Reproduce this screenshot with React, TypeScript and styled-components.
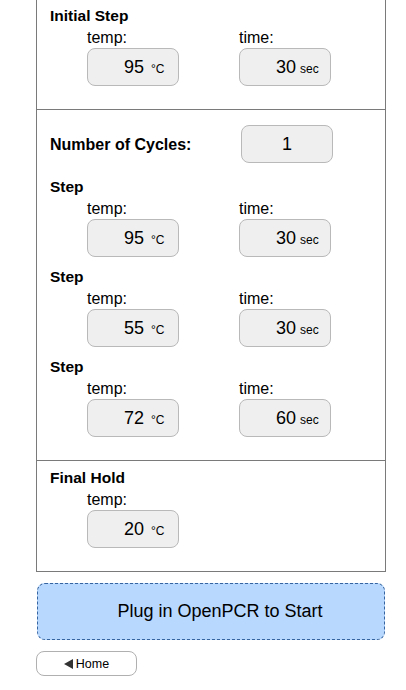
import styled, { createGlobalStyle } from "styled-components";

const GlobalStyle = createGlobalStyle`
  body {
    margin: 0;
    background: #ffffff;
    font-family: "Liberation Sans", Arial, Helvetica, sans-serif;
    color: #000;
  }
`;

const Page = styled.div`
  width: 406px;
  padding-left: 36px;
  box-sizing: border-box;
`;

const Panel = styled.div`
  width: 350px;
  box-sizing: border-box;
  border: 1px solid #7a7a7a;
  border-top: none;
`;

const Section = styled.div<{ $top: number; $divider?: boolean }>`
  padding: ${({ $top }) => $top}px 13px 23px 13px;
  border-top: ${({ $divider }) => ($divider ? "1px solid #7a7a7a" : "none")};
  display: flex;
  flex-direction: column;
`;

const StepBlock = styled.div`
  display: flex;
  flex-direction: column;
  & + & {
    margin-top: 11px;
  }
`;

const StepTitle = styled.div`
  font-size: 15.5px;
  font-weight: bold;
  line-height: 18px;
  height: 18px;
`;

const FieldRow = styled.div`
  display: flex;
  padding-left: 37px;
  margin-top: 5px;
`;

const Field = styled.div`
  width: 152px;
  flex-shrink: 0;
  display: flex;
  flex-direction: column;
`;

const FieldLabel = styled.div`
  font-size: 16px;
  line-height: 16px;
  height: 16px;
`;

const ValueBox = styled.div`
  margin-top: 2px;
  width: 92px;
  height: 38px;
  box-sizing: border-box;
  border: 1px solid #b9b9b9;
  border-radius: 8px;
  background: #efefef;
  display: flex;
  align-items: center;
`;

const Value = styled.span`
  width: 56px;
  text-align: right;
  font-size: 18px;
`;

const Unit = styled.span<{ $gap: number }>`
  font-size: 12px;
  margin-left: ${({ $gap }) => $gap}px;
  padding-top: 3px;
`;

const CyclesRow = styled.div`
  display: flex;
  align-items: center;
  margin-bottom: 15px;
`;

const CyclesLabel = styled.div`
  width: 191px;
  flex-shrink: 0;
  font-size: 16px;
  font-weight: bold;
  padding-top: 2px;
`;

const CyclesBox = styled(ValueBox)`
  margin-top: 0;
  justify-content: center;
  font-size: 18px;
`;

const StartButton = styled.div`
  margin-top: 11px;
  margin-left: 1px;
  width: 348px;
  height: 57px;
  box-sizing: border-box;
  border: 1px dashed #3564a0;
  border-radius: 8px;
  background: #b8d8fd;
  display: flex;
  align-items: center;
  justify-content: center;
  padding-left: 18px;
  font-size: 18px;
`;

const HomeButton = styled.div`
  margin-top: 11px;
  width: 101px;
  height: 25px;
  box-sizing: border-box;
  border: 1px solid #b0b0b0;
  border-radius: 8px;
  background: #fff;
  display: flex;
  align-items: center;
  justify-content: center;
  gap: 3px;
  font-size: 12.5px;
`;

type Temp = { temp: number; time?: number };

const Fields = ({ temp, time }: Temp) => (
  <FieldRow>
    <Field>
      <FieldLabel>temp:</FieldLabel>
      <ValueBox>
        <Value>{temp}</Value>
        <Unit $gap={7}>°C</Unit>
      </ValueBox>
    </Field>
    {time !== undefined && (
      <Field>
        <FieldLabel>time:</FieldLabel>
        <ValueBox>
          <Value>{time}</Value>
          <Unit $gap={4}>sec</Unit>
        </ValueBox>
      </Field>
    )}
  </FieldRow>
);

const Step = ({ title, temp, time }: Temp & { title: string }) => (
  <StepBlock>
    <StepTitle>{title}</StepTitle>
    <Fields temp={temp} time={time} />
  </StepBlock>
);

const steps = [
  { temp: 95, time: 30 },
  { temp: 55, time: 30 },
  { temp: 72, time: 60 },
];

export default function App() {
  return (
    <>
      <GlobalStyle />
      <Page>
        <Panel>
          <Section $top={7}>
            <Step title="Initial Step" temp={95} time={30} />
          </Section>
          <Section $top={15} $divider>
            <CyclesRow>
              <CyclesLabel>Number of Cycles:</CyclesLabel>
              <CyclesBox>1</CyclesBox>
            </CyclesRow>
            {steps.map((s, i) => (
              <Step key={i} title="Step" temp={s.temp} time={s.time} />
            ))}
          </Section>
          <Section $top={8} $divider>
            <Step title="Final Hold" temp={20} />
          </Section>
        </Panel>
        <StartButton>Plug in OpenPCR to Start</StartButton>
        <HomeButton>
          <svg width="9" height="10" viewBox="0 0 9 10">
            <path d="M0 5 L9 0 L9 10 Z" fill="#333" />
          </svg>
          Home
        </HomeButton>
      </Page>
    </>
  );
}
